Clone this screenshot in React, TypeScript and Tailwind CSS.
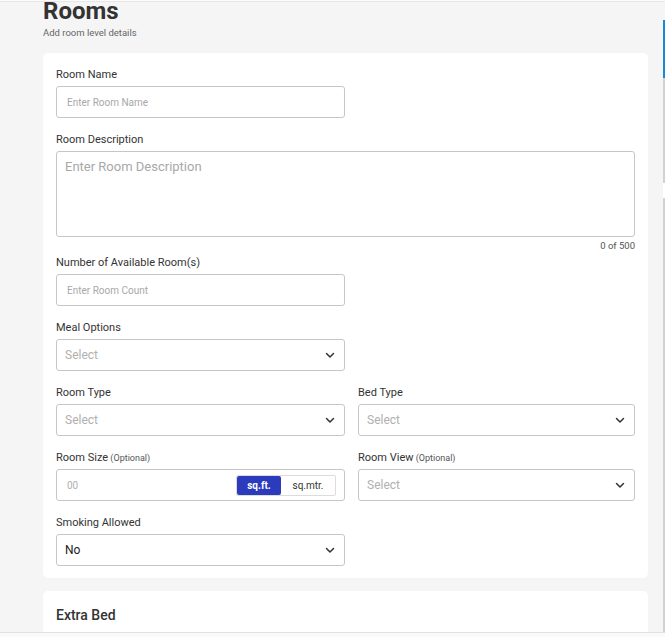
import React from 'react';

const font = { fontFamily: 'Roboto, "Noto Sans", Arial, sans-serif' };

const Chevron: React.FC = () => (
    <svg width="12" height="12" viewBox="0 0 12 12" fill="none" className="shrink-0">
        <path d="M2.5 4.5l3.5 3.5 3.5-3.5" stroke="#333" strokeWidth="1.5" strokeLinecap="round" strokeLinejoin="round" />
    </svg>
);

const Label: React.FC<{ text: string; optional?: boolean }> = ({ text, optional }) => (
    <div className="h-[18px] leading-[18px] text-[11px] text-[#333] mb-[2px] whitespace-nowrap">
        {text}
        {optional && <span className="text-[9px] text-[#555]"> (Optional)</span>}
    </div>
);

const TextInput: React.FC<{ placeholder: string }> = ({ placeholder }) => (
    <div className="h-[32px] border border-[#c6c6c6] rounded-[3px] bg-white flex items-center px-[10px] text-[10px] text-[#a8a8a8]">
        {placeholder}
    </div>
);

const SelectBox: React.FC<{ value?: string }> = ({ value }) => (
    <div className="h-[32px] border border-[#c6c6c6] rounded-[3px] bg-white flex items-center justify-between pl-[8px] pr-[8px]">
        <span className={value ? 'text-[12px] text-[#222]' : 'text-[12px] text-[#b0b0b0]'}>{value ?? 'Select'}</span>
        <Chevron />
    </div>
);

export default function App() {
    return (
        <div className="relative flex w-[665px] h-[637px] overflow-hidden bg-[#f5f5f5]" style={font}>
            {/* top header edge */}
            <div className="absolute top-0 left-0 right-0 h-[2px] bg-[#fbfbfb] border-b border-[#e6e6e6]" />

            <div className="w-[648px] shrink-0 pl-[43px]">
                <h1 className="text-[24px] leading-[24px] font-bold text-[#333] -mt-[1px]">Rooms</h1>
                <p className="text-[9.5px] leading-[10px] text-[#666] mt-[5px]">Add room level details</p>

                <div className="mt-[15px] bg-white rounded-[5px] px-[13px] pt-[13px] pb-[12px] flex flex-col gap-[13px]">
                    <div className="w-[289px]">
                        <Label text="Room Name" />
                        <TextInput placeholder="Enter Room Name" />
                    </div>

                    <div>
                        <Label text="Room Description" />
                        <div className="h-[86px] border border-[#c6c6c6] rounded-[3px] px-[8px] pt-[7px] text-[13px] leading-[16px] text-[#a8a8a8]">
                            Enter Room Description
                        </div>
                        <div className="mt-[3px] text-right text-[9.5px] leading-[12px] text-[#555]">0 of 500</div>
                        <div className="mt-[2px] w-[289px]">
                            <Label text="Number of Available Room(s)" />
                            <TextInput placeholder="Enter Room Count" />
                        </div>
                    </div>

                    <div className="w-[289px]">
                        <Label text="Meal Options" />
                        <SelectBox />
                    </div>

                    <div className="grid grid-cols-[289px_277px] gap-x-[13px]">
                        <div>
                            <Label text="Room Type" />
                            <SelectBox />
                        </div>
                        <div>
                            <Label text="Bed Type" />
                            <SelectBox />
                        </div>
                    </div>

                    <div className="grid grid-cols-[289px_277px] gap-x-[13px]">
                        <div>
                            <Label text="Room Size" optional />
                            <div className="h-[32px] border border-[#c6c6c6] rounded-[3px] bg-white flex items-center justify-between pl-[10px] pr-[8px]">
                                <span className="text-[10px] text-[#b0b0b0]">00</span>
                                <div className="flex h-[21px] border border-[#dcdcdc] rounded-[2px] text-[10px]">
                                    <span className="w-[44px] flex items-center justify-center bg-[#2b3bbb] text-white font-bold rounded-[2px]">sq.ft.</span>
                                    <span className="w-[54px] flex items-center justify-center text-[#333]">sq.mtr.</span>
                                </div>
                            </div>
                        </div>
                        <div>
                            <Label text="Room View" optional />
                            <SelectBox />
                        </div>
                    </div>

                    <div className="w-[289px]">
                        <Label text="Smoking Allowed" />
                        <SelectBox value="No" />
                    </div>
                </div>

                <div className="mt-[13px] bg-white rounded-[5px] px-[13px] pt-[15px] h-[60px]">
                    <h2 className="text-[14px] leading-[18px] font-medium text-[#333]">Extra Bed</h2>
                </div>
            </div>

            {/* right rail */}
            <div className="flex-1 flex justify-end">
                <div className="w-[2px] flex flex-col">
                    <div className="h-[20px]" />
                    <div className="h-[58px] bg-[#1a86d6]" />
                    <div className="h-[105px] bg-[#d2d2d2]" />
                    <div className="h-[15px] bg-white" />
                    <div className="flex-1 bg-[#d2d2d2]" />
                </div>
            </div>

            {/* bottom edge */}
            <div className="absolute bottom-0 left-0 right-0 h-[5px] bg-[#fafafa] border-t border-[#e2e2e2]" />
        </div>
    );
}
